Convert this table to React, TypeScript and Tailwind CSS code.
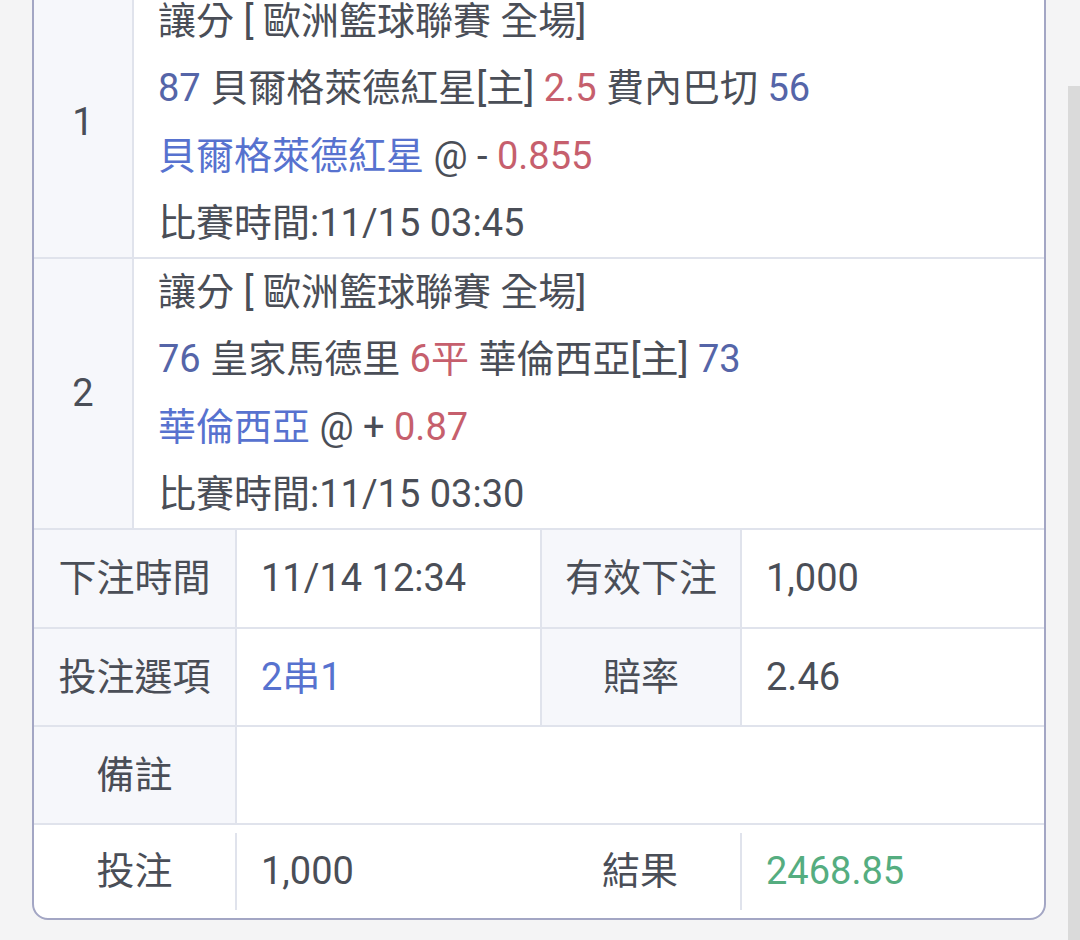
const gray = "text-[#4a4e57]";

type Match = {
  no: number;
  league: string;
  homeScore: string;
  home: string;
  line: string;
  away: string;
  awayScore: string;
  pick: string;
  sign: string;
  odds: string;
  time: string;
};

const matches: Match[] = [
  {
    no: 1,
    league: "讓分 [ 歐洲籃球聯賽 全場]",
    homeScore: "87",
    home: "貝爾格萊德紅星[主]",
    line: "2.5",
    away: "費內巴切",
    awayScore: "56",
    pick: "貝爾格萊德紅星",
    sign: "-",
    odds: "0.855",
    time: "比賽時間:11/15 03:45",
  },
  {
    no: 2,
    league: "讓分 [ 歐洲籃球聯賽 全場]",
    homeScore: "76",
    home: "皇家馬德里",
    line: "6平",
    away: "華倫西亞[主]",
    awayScore: "73",
    pick: "華倫西亞",
    sign: "+",
    odds: "0.87",
    time: "比賽時間:11/15 03:30",
  },
];

function MatchRow({ m, first }: { m: Match; first?: boolean }) {
  return (
    <div className={`flex ${first ? "" : "border-t-2 border-[#e0e3ec]"}`}>
      <div className="w-[100px] shrink-0 bg-[#f6f7fb] border-r-2 border-[#e0e3ec] flex items-center justify-center">
        {m.no}
      </div>
      <div className="flex-1 pl-[24px]">
        <div className="h-[67.25px] leading-[67.25px]">{m.league}</div>
        <div className="h-[67.25px] leading-[67.25px] whitespace-pre">
          <span className="text-[#5565a8]">{m.homeScore}</span> {m.home}{" "}
          <span className="text-[#c65f6d]">{m.line}</span> {m.away}{" "}
          <span className="text-[#5565a8]">{m.awayScore}</span>
        </div>
        <div className="h-[67.25px] leading-[67.25px] whitespace-pre">
          <span className="text-[#5772cf]">{m.pick}</span> @ {m.sign}{" "}
          <span className="text-[#c65f6d]">{m.odds}</span>
        </div>
        <div className="h-[67.25px] leading-[67.25px]">{m.time}</div>
      </div>
    </div>
  );
}

function Label({ children, w }: { children?: React.ReactNode; w: string }) {
  return (
    <div
      className={`${w} shrink-0 bg-[#f6f7fb] border-r-2 border-[#e0e3ec] flex items-center justify-center`}
    >
      {children}
    </div>
  );
}

export default function App() {
  return (
    <div
      className={`relative h-[940px] overflow-hidden bg-[#f4f4f5] ${gray} text-[38px]`}
      style={{ fontFamily: 'Roboto, "Noto Sans CJK TC", sans-serif' }}
    >
      <div className="pl-[32px] pr-[34px] -mt-[14px]">
        <div className="bg-white border-2 border-[#a3a6c4] rounded-b-[16px] overflow-hidden">
          {matches.map((m, i) => (
            <MatchRow key={m.no} m={m} first={i === 0} />
          ))}

          {/* bet info */}
          <div className="flex h-[99px] border-t-2 border-[#e0e3ec]">
            <Label w="w-[203px]">下注時間</Label>
            <div className="w-[305px] shrink-0 pl-[24px] flex items-center border-r-2 border-[#e0e3ec]">
              11/14 12:34
            </div>
            <Label w="w-[200px]">有效下注</Label>
            <div className="flex-1 pl-[24px] flex items-center">1,000</div>
          </div>
          <div className="flex h-[98px] border-t-2 border-[#e0e3ec]">
            <Label w="w-[203px]">投注選項</Label>
            <div className="w-[305px] shrink-0 pl-[24px] flex items-center border-r-2 border-[#e0e3ec] text-[#5772cf]">
              2串1
            </div>
            <Label w="w-[200px]">賠率</Label>
            <div className="flex-1 pl-[24px] flex items-center">2.46</div>
          </div>
          <div className="flex h-[98px] border-t-2 border-[#e0e3ec]">
            <Label w="w-[203px]">備註</Label>
            <div className="flex-1" />
          </div>
          <div className="flex h-[95px] items-center border-t-2 border-[#e0e3ec]">
            <div className="w-[201px] shrink-0 text-center">投注</div>
            <div className="w-[2px] h-[77px] bg-[#e0e3ec]" />
            <div className="w-[303px] shrink-0 pl-[24px]">1,000</div>
            <div className="w-[200px] shrink-0 text-center">結果</div>
            <div className="w-[2px] h-[77px] bg-[#e0e3ec]" />
            <div className="flex-1 pl-[24px] text-[#55ad80]">2468.85</div>
          </div>
        </div>
      </div>

      {/* scrollbar thumb */}
      <div className="absolute right-0 top-[86px] bottom-0 w-[12px] bg-[#dadada]" />
    </div>
  );
}
